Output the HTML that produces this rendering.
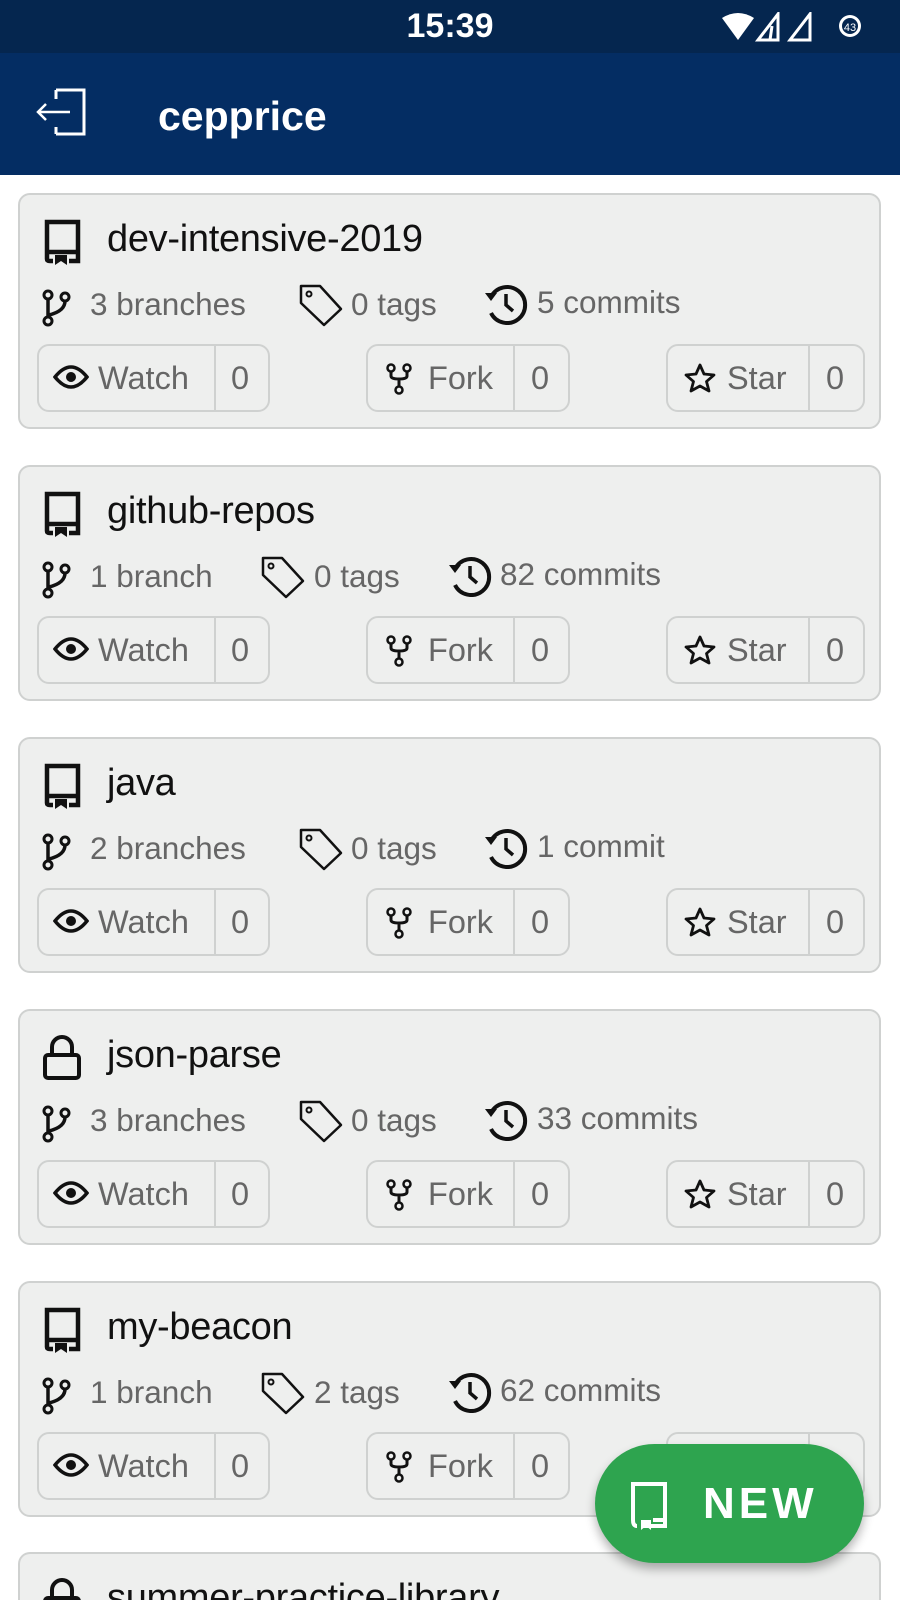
<!DOCTYPE html>
<html style="width:900px;height:1600px;overflow:hidden"><head><meta charset="utf-8"><style>
*{margin:0;padding:0;box-sizing:border-box}
html,body{width:900px;height:1600px;overflow:hidden}
body{background:#fff;font-family:"Liberation Sans",Roboto,sans-serif;position:relative}
.sb{position:absolute;left:0;top:0;width:900px;height:53px;background:#05264f}
.ab{position:absolute;left:0;top:53px;width:900px;height:122px;background:#042d63}
.card{position:absolute;left:18px;width:863px;height:236px;background:#eeefee;border:2px solid #cfd1d0;border-radius:12px;overflow:hidden}
.t{position:absolute;left:87px;top:19px;font-size:38px;color:#111;line-height:50px;letter-spacing:-0.3px}
.ti{position:absolute;left:22px;top:24px}
.st{position:absolute;top:89px;font-size:31.5px;color:#666;line-height:40px;white-space:nowrap}
.si{position:absolute;top:92px}
.btn{position:absolute;top:149px;height:68px;border:2px solid #cfd1d0;border-radius:12px;font-size:32.5px;color:#666;line-height:64px}
.btn .dv{position:absolute;top:0;bottom:0;width:2px;background:#cfd1d0}
.btn span{position:absolute}
.btn svg{position:absolute;top:17px}
.fab{position:absolute;left:595px;top:1444px;width:269px;height:119px;border-radius:60px;background:#2ea44f;box-shadow:0 6px 10px rgba(0,0,0,.3);color:#fff;font-size:44px;font-weight:bold;letter-spacing:4px}
</style></head><body>
<div class="sb">
<div style="position:absolute;left:0;width:900px;text-align:center;top:7px;color:#fff;font-size:34px;font-weight:bold">15:39</div>
<svg style="position:absolute;left:720px;top:12px" width="150" height="30" viewBox="0 0 150 30">
<path d="M2 6 Q18 -4 34 6 L18 28 Z" fill="#fff"/>
<path d="M58 2 L58 28 L38 28 Z" fill="none" stroke="#fff" stroke-width="3"/><path d="M52 14 L50 28" stroke="#fff" stroke-width="3"/>
<path d="M90 2 L90 28 L70 28 Z" fill="none" stroke="#fff" stroke-width="3"/>
<circle cx="130" cy="14" r="11" fill="#fff"/><circle cx="130" cy="14" r="8" fill="#05264f"/><text x="130" y="19" font-size="11" fill="#fff" text-anchor="middle" font-family="Liberation Sans">43</text>
</svg>
</div>
<div class="ab">
<svg style="position:absolute;left:34px;top:34px" width="56" height="50" viewBox="0 0 56 50"><path d="M22 3 H50 V47 H22 M22 3 V12 M22 47 V40" fill="none" stroke="#fff" stroke-width="3"/><path d="M36 25 H4 M12 17 L4 25 L12 33" fill="none" stroke="#fff" stroke-width="2.5"/></svg>
<div style="position:absolute;left:158px;top:40px;font-size:41px;font-weight:bold;color:#fff">cepprice</div>
</div>

<div id="c"></div>
<div class="fab">
<svg style="position:absolute;left:32px;top:36px" width="42" height="50" viewBox="0 0 42 50"><path d="M6 40 V4 H38 V40 H26 M6 40 Q6 46 10 46 M14 46 H38 V40" fill="none" stroke="#fff" stroke-width="4"/><path d="M14 40 H24 V50 L19 46 L14 50 Z" fill="#fff"/></svg>
<div style="position:absolute;left:108px;top:34px;line-height:52px">NEW</div>
</div>
<script>
var book='<svg class="ti" width="40" height="46" viewBox="0 0 40 46"><path d="M5 40 V3 H36 V36 M5 33 H36 M5 40 Q5 42 8 42 H11 M27 42 H36 V33" fill="none" stroke="#111" stroke-width="4.5"/><path d="M13 36 H25 V46 L19 42 L13 46 Z" fill="#111"/></svg>';
var lock='<svg class="ti" width="40" height="46" viewBox="0 0 40 46"><path d="M10 20 V12 A10 10 0 0 1 30 12 V20" fill="none" stroke="#111" stroke-width="4"/><rect x="3" y="20" width="34" height="23" rx="3" fill="none" stroke="#111" stroke-width="4"/></svg>';
var branch='<svg width="30" height="38" viewBox="0 0 30 38"><circle cx="7" cy="6" r="4" fill="none" stroke="#111" stroke-width="3"/><circle cx="7" cy="32" r="4" fill="none" stroke="#111" stroke-width="3"/><circle cx="24" cy="8" r="4" fill="none" stroke="#111" stroke-width="3"/><path d="M7 10 V28 M24 12 Q24 22 8 26" fill="none" stroke="#111" stroke-width="3.5"/></svg>';
var tag='<svg width="46" height="44" viewBox="0 0 46 44"><path d="M3 3 H22 L43 26 L26 42 L3 20 Z" fill="none" stroke="#111" stroke-width="2.5" stroke-linejoin="round"/><circle cx="11" cy="11" r="2.5" fill="none" stroke="#111" stroke-width="2"/></svg>';
var hist='<svg width="46" height="42" viewBox="0 0 46 42"><path d="M8 14 A18 18 0 1 1 8 30" fill="none" stroke="#111" stroke-width="4"/><path d="M2 10 L8 18 L14 10" fill="#111"/><path d="M23 11 V22 L30 28" fill="none" stroke="#111" stroke-width="3.5"/></svg>';
var eye='<svg style="left:14px" width="36" height="28" viewBox="0 0 36 28"><path d="M2 14 Q18 -6 34 14 Q18 34 2 14 Z" fill="none" stroke="#111" stroke-width="3.5"/><circle cx="18" cy="14" r="5" fill="#111"/></svg>';
var fork='<svg style="left:18px" width="26" height="32" viewBox="0 0 26 32"><circle cx="5" cy="5" r="3.5" fill="none" stroke="#111" stroke-width="2.5"/><circle cx="21" cy="5" r="3.5" fill="none" stroke="#111" stroke-width="2.5"/><circle cx="13" cy="27" r="3.5" fill="none" stroke="#111" stroke-width="2.5"/><path d="M5 9 V13 Q5 16 13 16 Q21 16 21 13 V9 M13 16 V23" fill="none" stroke="#111" stroke-width="3"/></svg>';
var star='<svg style="left:16px" width="32" height="30" viewBox="0 0 32 30"><path d="M16 2 L20 11 L30 12 L22.5 18.5 L25 28 L16 23 L7 28 L9.5 18.5 L2 12 L12 11 Z" fill="none" stroke="#111" stroke-width="2.8" stroke-linejoin="round"/></svg>';
var data=[[193,'dev-intensive-2019',book,'3 branches','0 tags','5 commits',0],
[465,'github-repos',book,'1 branch','0 tags','82 commits',1],
[737,'java',book,'2 branches','0 tags','1 commit',0],
[1009,'json-parse',lock,'3 branches','0 tags','33 commits',0],
[1281,'my-beacon',book,'1 branch','2 tags','62 commits',1],
[1552,'summer-practice-library',lock,'','','',0]];
var h='';
data.forEach(function(d){
var s=d[6]?[240,294,427,480]:[278,331,463,517];
var hh=d[3]?'':';height:60px;border-bottom:none;border-radius:12px 12px 0 0';
h+='<div class="card" style="top:'+d[0]+'px'+hh+'">'+d[2]+'<div class="t">'+d[1]+'</div>';
if(d[3]){
h+='<div class="si" style="left:21px;top:94px">'+branch+'</div><div class="st" style="left:70px">'+d[3]+'</div>';
h+='<div class="si" style="left:'+s[0]+'px;top:88px">'+tag+'</div><div class="st" style="left:'+s[1]+'px">'+d[4]+'</div>';
h+='<div class="si" style="left:'+s[2]+'px;top:88px">'+hist+'</div><div class="st" style="left:'+s[3]+'px;top:87px">'+d[5]+'</div>';
h+='<div class="btn" style="left:17px;width:233px">'+eye+'<span style="left:59px">Watch</span><div class="dv" style="left:175px"></div><span style="left:192px">0</span></div>';
h+='<div class="btn" style="left:346px;width:204px">'+fork+'<span style="left:60px">Fork</span><div class="dv" style="left:145px"></div><span style="left:163px">0</span></div>';
h+='<div class="btn" style="left:646px;width:199px">'+star+'<span style="left:59px">Star</span><div class="dv" style="left:140px"></div><span style="left:158px">0</span></div>';
}
h+='</div>';});
document.getElementById('c').outerHTML=h;
</script>
</body></html>
